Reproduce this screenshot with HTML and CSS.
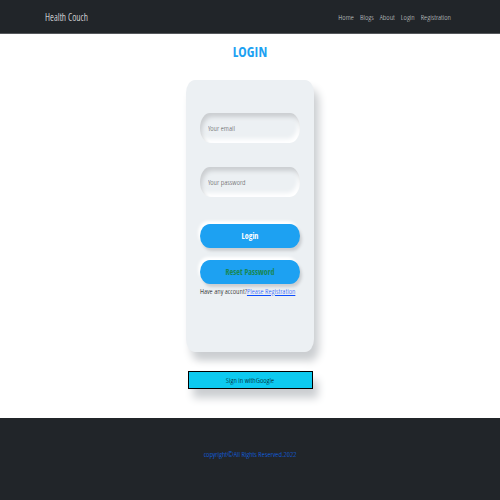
FILE: index.html
```html
<!DOCTYPE html>
<html lang="en">
<head>
<meta charset="utf-8">
<meta name="viewport" content="width=device-width, initial-scale=1">
<title>Health Couch</title>
<link rel="stylesheet" href="styles.css">
</head>
<body>
<header class="navbar">
  <a class="brand" href="#">Health Couch</a>
  <nav class="links">
    <a href="#">Home</a>
    <a href="#">Blogs</a>
    <a href="#">About</a>
    <a href="#">Login</a>
    <a href="#">Registration</a>
  </nav>
</header>
<main>
  <h1>LOGIN</h1>
  <form class="card">
    <input class="field" type="email" placeholder="Your email" aria-label="Your email">
    <input class="field" type="password" placeholder="Your password" aria-label="Your password">
    <button class="pill" type="submit">Login</button>
    <button class="pill reset" type="button">Reset Password</button>
    <p class="account">Have any account?<a href="#">Please Registration</a></p>
  </form>
  <button class="google" type="button">Sign in withGoogle</button>
</main>
<footer class="footer"><p>copyright©All Rights Reserved.2022</p></footer>
</body>
</html>
```
FILE: styles.css
```css
* {
  box-sizing: border-box;
}

body {
  display: flex;
  flex-direction: column;
  min-height: 100vh;
  margin: 0;
  background: #fff;
  color: #000;
  font-family: "Open Sans Condensed Light", "Open Sans Condensed", "Open Sans", sans-serif;
  font-size: 8px;
  font-weight: 300;
  line-height: 12px;
}

button,
input {
  font: inherit;
}

.navbar {
  display: flex;
  justify-content: space-between;
  align-items: center;
  padding: 11px 9.8% 10px 9%;
  background: #212529;
  border-bottom: 1px solid #55585c;
}

.navbar a {
  text-decoration: none;
}

.brand {
  color: #fff;
  font-size: 10px;
}

.links {
  display: flex;
  gap: 6px;
}

.links a {
  color: #d0d2d4;
}

main {
  display: flex;
  flex-direction: column;
  align-items: center;
}

h1 {
  margin: 8px 0 18px;
  color: #1da1f2;
  font-family: "Open Sans Condensed", "Open Sans", sans-serif;
  font-size: 14px;
  font-weight: 700;
  line-height: 20px;
}

.card {
  display: flex;
  flex-direction: column;
  width: 128px;
  max-width: 100%;
  padding: 33px 14px 54px;
  border-radius: 9px / 13px;
  background: #ecf0f3;
  box-shadow: 5px 9px 9px #cbced1, -4px -4px 8px #fff;
}

.field {
  width: 100%;
  height: 30px;
  margin: 0 0 24px;
  padding: 0 8px 2px;
  border: 0;
  border-radius: 10px / 15px;
  outline: 0;
  background: #ecf0f3;
  color: #212529;
  box-shadow: inset 2px 4px 4px #cbced1, inset -2px -4px 4px #fff;
}

.field::placeholder {
  color: #555;
  opacity: 1;
}

.pill {
  height: 24px;
  margin: 3px 0 9px;
  padding: 0;
  border: 0;
  border-radius: 10px / 12px;
  background: #1da1f2;
  color: #fff;
  font-family: "Open Sans Condensed", "Open Sans", sans-serif;
  font-weight: 700;
  box-shadow: 2px 3px 3px #cbced1, -2px -3px 3px #fff;
}

.reset {
  margin-bottom: 1px;
  color: #198754;
}

.account {
  margin: 0 0 1px;
  white-space: nowrap;
}

.account a {
  color: #0d4efd;
}

.google {
  width: 25%;
  min-width: 125px;
  height: 18px;
  margin: 19px 0 29px;
  padding: 0;
  border: 1px solid #000;
  background: #0dcaf0;
  color: #000;
  box-shadow: 5px 9px 9px #cbced1, -4px -4px 8px #fff;
}

.footer {
  flex: 1;
  padding: 30px 0;
  background: #212529;
  color: #0d6efd;
  text-align: center;
}

.footer p {
  margin: 0;
}
```
